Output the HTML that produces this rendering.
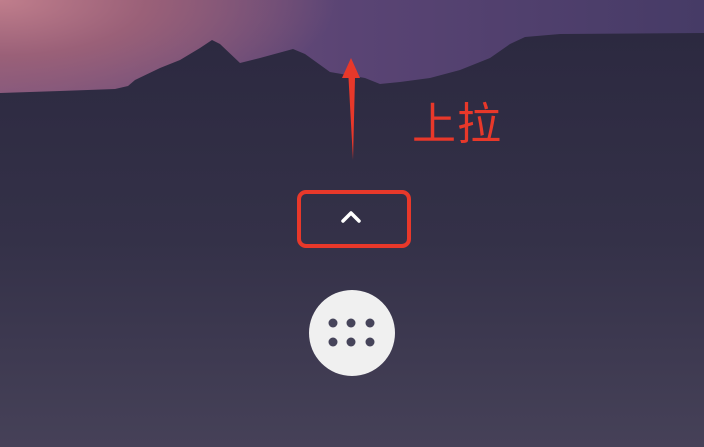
<!DOCTYPE html>
<html><head><meta charset="utf-8"><style>
html,body{margin:0;padding:0;width:704px;height:447px;overflow:hidden}
body{position:relative;background:#2e2b43}
.sky{position:absolute;left:0;top:0;width:704px;height:130px;background:radial-gradient(ellipse 420px 160px at 0px 0px,#c07e8c 0%,#9a6078 35%,rgba(110,75,110,0) 80%),linear-gradient(90deg,#7a5580,#5a4474 50%,#463b66)}
.txt{position:absolute;left:412px;top:88px;font:44px "Liberation Sans","Noto Sans CJK SC",sans-serif;color:#e8382a;letter-spacing:1px}
.box{position:absolute;left:297px;top:190px;width:106px;height:50px;border:4px solid #e8382a;border-radius:9px}
.circ{position:absolute;left:309px;top:290px;width:86px;height:86px;border-radius:50%;background:#f0f0f0}
</style></head><body>
<div class="sky"></div>
<svg style="position:absolute;left:0;top:0" width="704" height="447">
<defs><linearGradient id="g" x1="0" y1="0" x2="0" y2="1" gradientUnits="userSpaceOnUse" x2b="0"><stop offset="0" stop-color="#2c293f"/></linearGradient>
<linearGradient id="m" x1="0" y1="33" x2="0" y2="447" gradientUnits="userSpaceOnUse"><stop offset="0" stop-color="#2c2940"/><stop offset="0.5" stop-color="#343148"/><stop offset="1" stop-color="#464158"/></linearGradient></defs>
<path d="M0 93 L60 91 L115 89 L128 86 L135 80 L160 68 L180 60 L200 48 L212 40 L220 44 L240 63 L260 58 L293 49 L305 54 L330 72 L365 78 L380 84 L400 82 L430 78 L460 70 L490 58 L510 44 L525 37 L560 34 L704 33 L704 447 L0 447 Z" fill="url(#m)"/>
<path d="M353 160 L348.5 78 L342 78 L351 58 L360 78 L355 78 Z" fill="#e8382a"/>
<path d="M343 221 L351 213 L359 221" stroke="#fff" stroke-width="3.5" fill="none" stroke-linecap="round" stroke-linejoin="round"/>
</svg>
<div class="txt">上拉</div>
<div class="box"></div>
<div class="circ"></div>
<svg style="position:absolute;left:0;top:0" width="704" height="447" fill="#46445a">
<circle cx="333" cy="323" r="4.5"/><circle cx="351" cy="323" r="4.5"/><circle cx="370" cy="323" r="4.5"/>
<circle cx="333" cy="342" r="4.5"/><circle cx="351" cy="342" r="4.5"/><circle cx="370" cy="342" r="4.5"/>
</svg>
</body></html>
